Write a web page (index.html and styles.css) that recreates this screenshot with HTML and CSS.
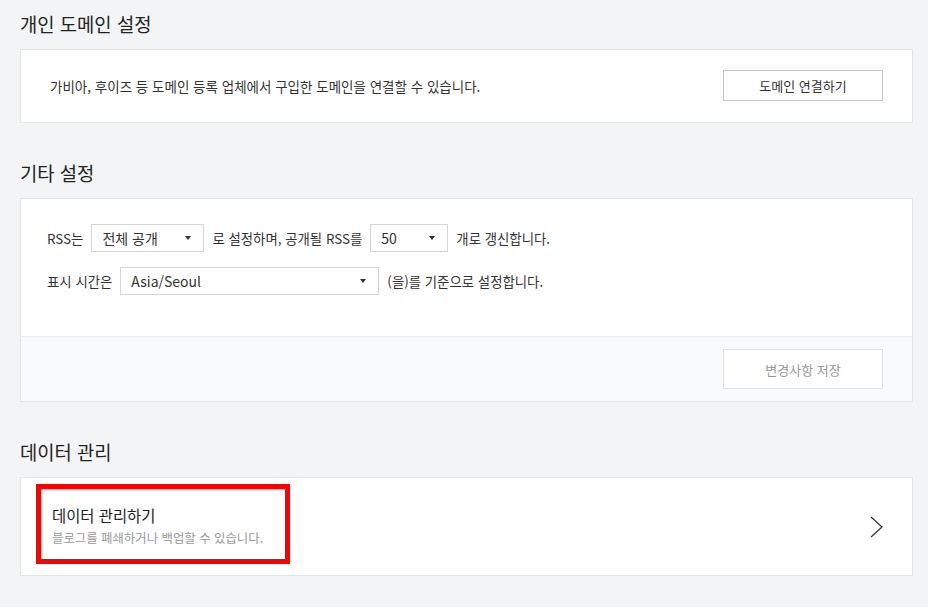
FILE: index.html
```html
<!DOCTYPE html>
<html lang="ko">
<head>
<meta charset="utf-8">
<title>블로그 설정</title>
<link rel="stylesheet" href="styles.css">
</head>
<body>
<div class="page">
  <section class="section first">
    <h2 class="section-title">개인 도메인 설정</h2>
    <div class="card card-row">
      <p class="desc">가비아, 후이즈 등 도메인 등록 업체에서 구입한 도메인을 연결할 수 있습니다.</p>
      <button class="btn btn-connect" type="button">도메인 연결하기</button>
    </div>
  </section>

  <section class="section">
    <h2 class="section-title">기타 설정</h2>
    <div class="card">
      <div class="card-body">
        <div class="form-row">
          <span class="label">RSS는</span>
          <div class="select sel-open"><span>전체 공개</span><i class="caret"></i></div>
          <span class="label">로 설정하며, 공개될 RSS를</span>
          <div class="select sel-count"><span>50</span><i class="caret"></i></div>
          <span class="label">개로 갱신합니다.</span>
        </div>
        <div class="form-row">
          <span class="label">표시 시간은</span>
          <div class="select sel-tz"><span>Asia/Seoul</span><i class="caret"></i></div>
          <span class="label">(을)를 기준으로 설정합니다.</span>
        </div>
      </div>
      <div class="card-foot">
        <button class="btn btn-save" type="button">변경사항 저장</button>
      </div>
    </div>
  </section>

  <section class="section">
    <h2 class="section-title">데이터 관리</h2>
    <div class="card link-card">
      <div class="link-text">
        <strong class="link-title">데이터 관리하기</strong>
        <span class="link-sub">블로그를 폐쇄하거나 백업할 수 있습니다.</span>
      </div>
      <svg class="chev" width="13" height="22" viewBox="0 0 13 22" aria-hidden="true">
        <polyline points="1,1 12,11 1,21" fill="none" stroke="#333" stroke-width="1.2"/>
      </svg>
      <div class="highlight"></div>
    </div>
  </section>
</div>
</body>
</html>
```

FILE: styles.css
```css
* { box-sizing: border-box; }

html, body {
  margin: 0;
  padding: 0;
  background: #f3f4f6;
}

body {
  font-family: "Noto Sans CJK KR", "Noto Sans", sans-serif;
  color: #333;
}

.page {
  width: 893px;
  margin-left: 20px;
}

.section { margin-top: 26px; }
.section.first { margin-top: 0; }

.section-title {
  margin: 0;
  padding: 12px 0 13px;
  font-size: 18.8px;
  line-height: 24px;
  font-weight: 400;
  color: #222;
}

.card {
  background: #fff;
  border: 1px solid #e2e4e8;
}

.card-row {
  display: flex;
  align-items: center;
  justify-content: space-between;
  padding: 20px 29px 21px;
}

.desc {
  margin: 0;
  font-size: 13.5px;
  line-height: 20px;
  color: #333;
}

.btn {
  font-family: inherit;
  font-size: 13px;
  background: #fff;
  cursor: pointer;
  width: 160px;
  padding: 0;
}

.btn-connect {
  height: 31px;
  border: 1px solid #c5c8cc;
  color: #333;
}

.card-body {
  padding: 25px 26px 41px;
  display: flex;
  flex-direction: column;
  gap: 15px;
}

.form-row {
  display: flex;
  align-items: center;
  gap: 8px;
  height: 28px;
}

.label {
  font-size: 13.4px;
  color: #333;
  white-space: nowrap;
}

.select {
  height: 28px;
  border: 1px solid #d3d5d9;
  background: #fff;
  display: flex;
  align-items: center;
  justify-content: space-between;
  padding: 0 12px 0 10px;
  font-size: 14px;
  color: #333;
}

.sel-open { width: 113px; }
.sel-count { width: 78px; }
.sel-tz { width: 259px; }

.caret {
  width: 0;
  height: 0;
  border-left: 3px solid transparent;
  border-right: 3px solid transparent;
  border-top: 4px solid #333;
}

.card-foot {
  border-top: 1px solid #e8eaed;
  background: #f9fafb;
  padding: 12px 29px 12px;
  display: flex;
  justify-content: flex-end;
}

.btn-save {
  height: 40px;
  border: 1px solid #dfe1e5;
  color: #999;
  background: #fff;
}

.link-card {
  position: relative;
  display: flex;
  align-items: center;
  justify-content: space-between;
  padding: 27px 29px 28px 31px;
}

.link-text {
  display: flex;
  flex-direction: column;
  gap: 4px;
}

.link-title {
  font-size: 15.4px;
  line-height: 20px;
  font-weight: 400;
  color: #222;
}

.link-sub {
  font-size: 12.4px;
  line-height: 18px;
  color: #999;
}

.chev { display: block; margin-top: 2px; }

.highlight {
  position: absolute;
  left: 15px;
  top: 6px;
  width: 254px;
  height: 80px;
  border: 5px solid #f00;
  pointer-events: none;
}
```
